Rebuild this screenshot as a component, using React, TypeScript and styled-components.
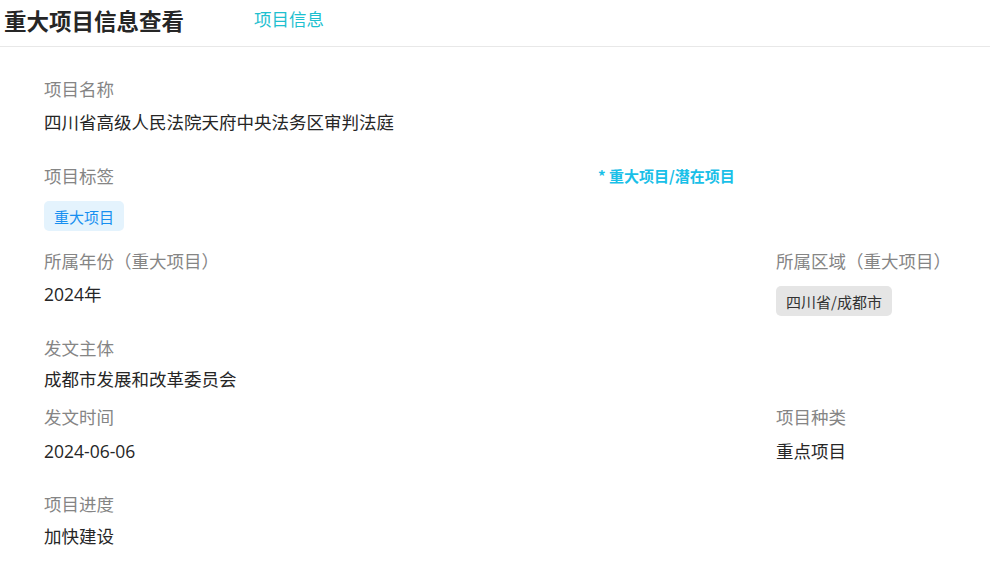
import React from "react";
import styled, { createGlobalStyle } from "styled-components";

const GlobalStyle = createGlobalStyle`
  html, body {
    margin: 0;
    padding: 0;
    background: #ffffff;
  }
  body {
    font-family: "Noto Sans CJK SC", "Noto Sans", sans-serif;
  }
`;

const Page = styled.div`
  width: 990px;
  min-height: 565px;
  background: #ffffff;
`;

const Header = styled.header`
  display: flex;
  align-items: flex-start;
  height: 46px;
  padding-left: 4px;
  border-bottom: 1px solid #e8e8e8;
`;

const Title = styled.h1`
  margin: 0;
  font-size: 22.5px;
  line-height: 40px;
  font-weight: 700;
  color: #262626;
`;

const Tab = styled.div`
  margin-left: 70px;
  font-size: 17.5px;
  line-height: 38px;
  color: #1ec0cf;
`;

const Body = styled.main`
  padding: 30px 44px 0 44px;
`;

const Row = styled.section<{ $mt: number }>`
  display: grid;
  grid-template-columns: 732px 1fr;
  align-items: start;
  margin-top: ${(p) => p.$mt}px;
  &:first-child {
    margin-top: 0;
  }
`;

const Field = styled.div<{ $gap: number }>`
  display: flex;
  flex-direction: column;
  align-items: flex-start;
  gap: ${(p) => p.$gap}px;
`;

const LabelRow = styled.div`
  display: grid;
  grid-template-columns: 554px auto;
  align-items: center;
`;

const Label = styled.div`
  font-size: 17.5px;
  line-height: 24px;
  color: #858585;
  white-space: nowrap;
`;

const Value = styled.div`
  font-family: "Open Sans", "Noto Sans CJK SC", sans-serif;
  font-size: 17.5px;
  line-height: 24px;
  color: #262626;
  white-space: nowrap;
`;

const Hint = styled.span`
  font-size: 15px;
  line-height: 24px;
  font-weight: 700;
  color: #19c0e8;
  white-space: nowrap;
`;

const Tag = styled.span<{ $tone: "blue" | "gray" }>`
  display: inline-flex;
  align-items: center;
  height: 30px;
  padding: 0 10px;
  border-radius: 5px;
  font-size: 15px;
  white-space: nowrap;
  background: ${(p) => (p.$tone === "blue" ? "#e4f3fd" : "#e5e5e5")};
  color: ${(p) => (p.$tone === "blue" ? "#178ff0" : "#333333")};
`;

export default function App() {
  return (
    <Page>
      <GlobalStyle />
      <Header>
        <Title>重大项目信息查看</Title>
        <Tab>项目信息</Tab>
      </Header>
      <Body>
        <Row $mt={0}>
          <Field $gap={9}>
            <Label>项目名称</Label>
            <Value>四川省高级人民法院天府中央法务区审判法庭</Value>
          </Field>
        </Row>
        <Row $mt={30}>
          <Field $gap={13}>
            <LabelRow>
              <Label>项目标签</Label>
              <Hint>* 重大项目/潜在项目</Hint>
            </LabelRow>
            <Tag $tone="blue">重大项目</Tag>
          </Field>
        </Row>
        <Row $mt={18}>
          <Field $gap={9}>
            <Label>所属年份（重大项目）</Label>
            <Value>2024年</Value>
          </Field>
          <Field $gap={13}>
            <Label>所属区域（重大项目）</Label>
            <Tag $tone="gray">四川省/成都市</Tag>
          </Field>
        </Row>
        <Row $mt={20}>
          <Field $gap={7}>
            <Label>发文主体</Label>
            <Value>成都市发展和改革委员会</Value>
          </Field>
        </Row>
        <Row $mt={14}>
          <Field $gap={10}>
            <Label>发文时间</Label>
            <Value>2024-06-06</Value>
          </Field>
          <Field $gap={10}>
            <Label>项目种类</Label>
            <Value>重点项目</Value>
          </Field>
        </Row>
        <Row $mt={29}>
          <Field $gap={8}>
            <Label>项目进度</Label>
            <Value>加快建设</Value>
          </Field>
        </Row>
      </Body>
    </Page>
  );
}
